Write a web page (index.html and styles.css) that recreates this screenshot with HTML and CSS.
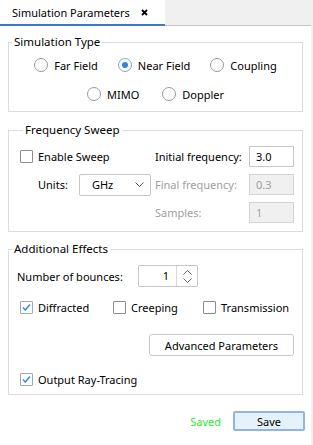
FILE: index.html
```html
<!DOCTYPE html>
<html lang="en">
<head>
  <meta charset="UTF-8">
  <meta name="viewport" content="width=device-width, initial-scale=1.0">
  <title>Simulation Parameters</title>
  <link rel="stylesheet" href="styles.css">
</head>
<body>
  <div class="window">
    <div class="tabbar">
      <div class="tab">
        <span>Simulation Parameters</span>
        <svg class="close" width="7" height="7" viewBox="0 0 7 7"><path d="M1 1L6 6M6 1L1 6" stroke="#000" stroke-width="1.8"/></svg>
      </div>
      <div class="tab-rest"></div>
    </div>

    <div class="panel">
      <fieldset class="group group-type">
        <legend>Simulation Type</legend>
        <div class="radio-row">
          <label class="radio"><span class="ring"></span>Far Field</label>
          <label class="radio checked"><span class="ring"></span>Near Field</label>
          <label class="radio"><span class="ring"></span>Coupling</label>
        </div>
        <div class="radio-row second">
          <label class="radio"><span class="ring"></span>MIMO</label>
          <label class="radio"><span class="ring"></span>Doppler</label>
        </div>
      </fieldset>

      <fieldset class="group group-freq">
        <legend>Frequency Sweep</legend>
        <div class="freq-grid">
          <label class="check"><span class="box"></span>Enable Sweep</label>
          <span class="field-label">Initial frequency:</span>
          <span class="input">3.0</span>

          <div class="units">
            <span>Units:</span>
            <span class="select">GHz
              <svg width="9" height="5" viewBox="0 0 9 5"><path d="M0.5 0.5L4.5 4.5L8.5 0.5" fill="none" stroke="#555" stroke-width="1"/></svg>
            </span>
          </div>
          <span class="field-label disabled">Final frequency:</span>
          <span class="input disabled">0.3</span>

          <span></span>
          <span class="field-label disabled">Samples:</span>
          <span class="input disabled">1</span>
        </div>
      </fieldset>

      <fieldset class="group group-effects">
        <legend>Additional Effects</legend>
        <div class="bounces">
          <span>Number of bounces:</span>
          <span class="spinbox">
            <span class="spin-value">1</span>
            <span class="spin-buttons">
              <svg width="9" height="5" viewBox="0 0 9 5"><path d="M0.5 4.5L4.5 0.5L8.5 4.5" fill="none" stroke="#666" stroke-width="1"/></svg>
              <svg width="9" height="5" viewBox="0 0 9 5"><path d="M0.5 0.5L4.5 4.5L8.5 0.5" fill="none" stroke="#666" stroke-width="1"/></svg>
            </span>
          </span>
        </div>
        <div class="effect-row">
          <label class="check checked"><span class="box"><svg width="11" height="11" viewBox="0 0 11 11"><path d="M2 5.5L4.3 8L9 2.5" fill="none" stroke="#3b8de4" stroke-width="1.6"/></svg></span>Diffracted</label>
          <label class="check"><span class="box"></span>Creeping</label>
          <label class="check"><span class="box"></span>Transmission</label>
        </div>
        <div class="advanced-row">
          <button class="btn">Advanced Parameters</button>
        </div>
        <label class="check checked output"><span class="box"><svg width="11" height="11" viewBox="0 0 11 11"><path d="M2 5.5L4.3 8L9 2.5" fill="none" stroke="#3b8de4" stroke-width="1.6"/></svg></span>Output Ray-Tracing</label>
      </fieldset>
    </div>

    <div class="footer">
      <span class="saved">Saved</span>
      <button class="btn save">Save</button>
    </div>
  </div>
</body>
</html>
```

FILE: styles.css
```css
body {
  margin: 0;
  background: #f0f0f0;
  font-family: "Noto Sans", sans-serif;
  font-size: 11px;
  color: #000;
}
.window {
  width: 311px;
  height: 445px;
  display: flex;
  flex-direction: column;
  background: #fff;
}

/* tab strip */
.tabbar {
  height: 26px;
  display: flex;
  background: #f0f0f0;
}
.tab {
  width: 165px;
  box-sizing: border-box;
  background: #fff;
  border-bottom: 2px solid #3a7bc6;
  display: flex;
  align-items: center;
  padding-left: 12px;
  gap: 11px;
}
.tab-rest {
  flex: 1;
  box-sizing: border-box;
  border-bottom: 1px solid #c4c4c4;
}

.panel {
  display: flex;
  flex-direction: column;
  padding: 8px 8px 0;
}

/* group boxes */
.group {
  margin: 0;
  border: 1px solid #dcdcdc;
  padding: 0;
  min-width: 0;
}
.group legend {
  padding: 0 2px;
  margin-left: 3px;
  line-height: 16px;
  font-size: 11.5px;
}
.group-freq {
  margin-top: 10px;
}
.group-effects {
  margin-top: 9px;
}

/* radios */
.group-type {
  padding: 5px 0 7px;
}
.radio-row {
  display: flex;
  justify-content: center;
  gap: 20px;
  height: 20px;
  align-items: center;
}
.radio-row.second {
  margin-top: 9px;
  gap: 23px;
}
.radio {
  display: flex;
  align-items: center;
  gap: 6px;
}
.ring {
  width: 12px;
  height: 12px;
  border: 1px solid #9a9a9a;
  border-radius: 50%;
  display: flex;
  align-items: center;
  justify-content: center;
}
.radio.checked .ring {
  border-color: #7ea8d8;
}
.radio.checked .ring::after {
  content: "";
  width: 6px;
  height: 6px;
  border-radius: 50%;
  background: #2f86e0;
}

/* checkboxes */
.check {
  display: flex;
  align-items: center;
  gap: 5px;
}
.box {
  width: 11px;
  height: 11px;
  border: 1px solid #8c8c8c;
  border-radius: 1px;
  display: flex;
  align-items: center;
  justify-content: center;
}
.check.checked .box {
  border-color: #9aa7b6;
}

/* frequency sweep */
.group-freq {
  padding: 8px 8px 8px 11px;
}
.freq-grid {
  display: grid;
  grid-template-columns: 135px 94px 45px;
  grid-auto-rows: 21px;
  row-gap: 7px;
  align-items: center;
}
.field-label.disabled, .input.disabled {
  color: #a0a0a0;
}
.input {
  height: 21px;
  box-sizing: border-box;
  border: 1px solid #c6c6c6;
  padding-left: 6px;
  display: flex;
  align-items: center;
}
.input.disabled {
  background: #f0f0f0;
  border-color: #d4d4d4;
}
.units {
  display: flex;
  align-items: center;
  padding-left: 18px;
  gap: 11px;
}
.select {
  width: 72px;
  height: 22px;
  box-sizing: border-box;
  border: 1px solid #c6c6c6;
  border-radius: 2px;
  display: flex;
  align-items: center;
  justify-content: space-between;
  padding: 0 6px 0 12px;
}

/* additional effects */
.group-effects {
  padding: 8px 8px 5px 0;
}
.bounces {
  display: grid;
  grid-template-columns: 121px 60px;
  align-items: center;
  padding-left: 8px;
  height: 22px;
}
.spinbox {
  height: 22px;
  box-sizing: border-box;
  border: 1px solid #c6c6c6;
  border-radius: 2px;
  display: flex;
}
.spin-value {
  flex: 1;
  text-align: right;
  padding-right: 7px;
  line-height: 20px;
  border-right: 1px solid #d8d8d8;
}
.spin-buttons {
  width: 20px;
  display: flex;
  flex-direction: column;
  align-items: center;
  justify-content: center;
  gap: 3px;
}
.effect-row {
  display: grid;
  grid-template-columns: 93px 90px auto;
  height: 20px;
  align-items: center;
  margin-top: 10px;
  padding-left: 11px;
}
.advanced-row {
  display: flex;
  justify-content: flex-end;
  margin-top: 17px;
}
.btn {
  font: inherit;
  color: #000;
  background: #fff;
  border: 1px solid #c8c8c8;
  border-radius: 3px;
  padding: 0;
  height: 22px;
  width: 145px;
}
.output {
  height: 20px;
  margin-top: 13px;
  padding-left: 11px;
}

/* footer */
.footer {
  display: flex;
  justify-content: flex-end;
  align-items: center;
  gap: 12px;
  padding-right: 6px;
  margin-top: 16px;
}
.saved {
  color: #2ee62e;
}
.btn.save {
  width: 72px;
  height: 20px;
  background: #e5f1fb;
  border: 2px solid #8fb5e2;
  border-radius: 2px;
}
```
